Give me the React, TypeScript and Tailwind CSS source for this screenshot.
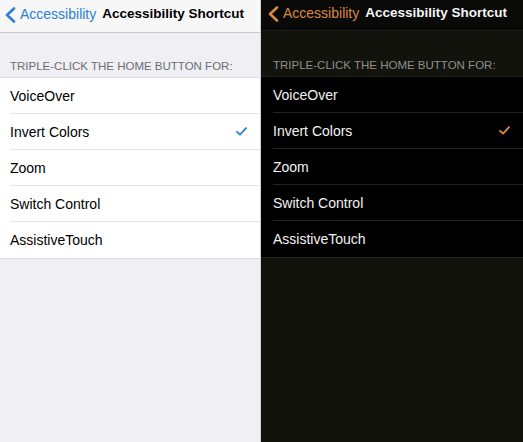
import React from "react";

type Theme = {
    panel: string;
    nav: string;
    back: string;
    title: string;
    header: string;
    headerText: string;
    list: string;
    rowPad: string;
    row: string;
    divider: string;
    check: string;
};

const light: Theme = {
    panel: "w-[261px] h-[442px] flex flex-col bg-[#efeff4] border-r border-[#d2d2d6]",
    nav: "h-[33px] pt-[6px] pl-[4px] flex items-start bg-[#f7f7f8] border-b border-[#cacacd]",
    back: "text-[#2c7fd6]",
    title: "text-black",
    header: "h-[44px] flex items-end pb-[4px] pl-[10px] bg-[#efeff4]",
    headerText: "text-[#6d6d72]",
    list: "bg-white border-t border-b border-[#dcdce0]",
    rowPad: "pl-[10px]",
    row: "text-black",
    divider: "border-[#e4e4e7]",
    check: "#2c7fd6",
};

const dark: Theme = {
    panel: "flex-1 h-[442px] flex flex-col bg-[#12120d]",
    nav: "h-[31px] pt-[5px] pl-[6px] flex items-start bg-[#090908] border-b border-[#1c1c18]",
    back: "text-[#d98a40]",
    title: "text-[#f5f5f5]",
    header: "h-[45px] flex items-end pb-[4px] pl-[12px] bg-[#13130e]",
    headerText: "text-[#8f8f8a]",
    list: "bg-black border-t border-b border-[#1f1f1c]",
    rowPad: "pl-[12px]",
    row: "text-[#f2f2f2]",
    divider: "border-[#232320]",
    check: "#e08a3c",
};

const options = ["VoiceOver", "Invert Colors", "Zoom", "Switch Control", "AssistiveTouch"];

function Chevron({ className }: { className: string }) {
    return (
        <svg width="12" height="18" viewBox="0 0 12 18" className={className}>
            <polyline
                points="10,2.5 3,9 10,15.5"
                fill="none"
                stroke="currentColor"
                strokeWidth="2.6"
                strokeLinecap="round"
                strokeLinejoin="round"
            />
        </svg>
    );
}

function Check({ color }: { color: string }) {
    return (
        <svg width="11" height="9" viewBox="0 0 11 9">
            <polyline
                points="1,4.8 4,7.6 10,1.2"
                fill="none"
                stroke={color}
                strokeWidth="1.8"
                strokeLinecap="round"
                strokeLinejoin="round"
            />
        </svg>
    );
}

function Panel({ t }: { t: Theme }) {
    return (
        <div className={t.panel}>
            {/* nav bar */}
            <div className={t.nav}>
                <Chevron className={t.back} />
                <span className={t.back + " ml-[4px] text-[14px] leading-[16px]"}>Accessibility</span>
                <span className={t.title + " ml-[6px] text-[13.5px] leading-[16px] font-bold"}>
                    Accessibility Shortcut
                </span>
            </div>

            {/* section header */}
            <div className={t.header}>
                <span className={t.headerText + " text-[11.5px] leading-[14px] uppercase"}>
                    Triple-click the home button for:
                </span>
            </div>

            {/* options */}
            <div className={t.list}>
                {options.map((o, i) => (
                    <div key={o} className={t.rowPad}>
                        <div
                            className={
                                "h-[36px] flex items-center justify-between pr-[13px] " +
                                (i < options.length - 1 ? "border-b " + t.divider : "")
                            }
                        >
                            <span className={t.row + " text-[14px] leading-[16px]"}>{o}</span>
                            {o === "Invert Colors" && <Check color={t.check} />}
                        </div>
                    </div>
                ))}
            </div>
        </div>
    );
}

export default function App() {
    return (
        <div
            className="w-[523px] h-[442px] flex overflow-hidden"
            style={{ fontFamily: '"Liberation Sans", Arial, sans-serif' }}
        >
            <Panel t={light} />
            <Panel t={dark} />
        </div>
    );
}
